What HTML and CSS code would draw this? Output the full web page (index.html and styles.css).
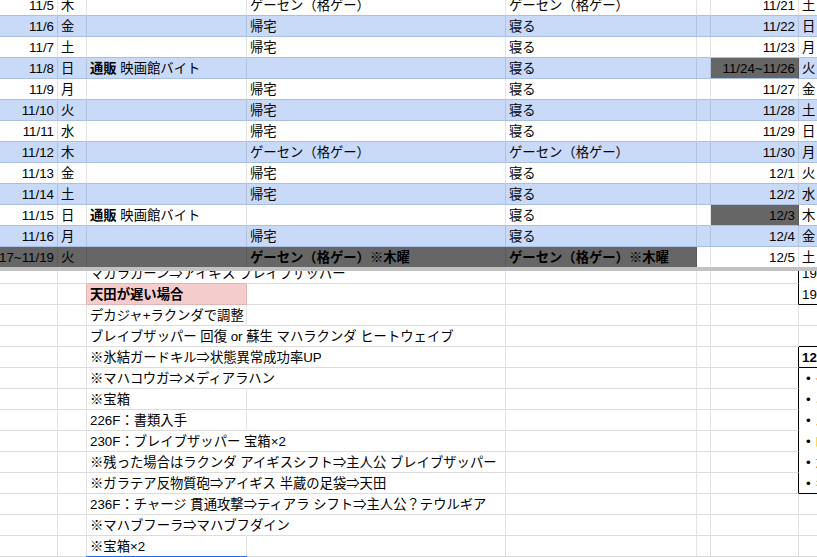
FILE: index.html
```html
<!DOCTYPE html>
<html lang="ja">
<head>
<meta charset="utf-8">
<title>Sheet</title>
<link rel="stylesheet" href="styles.css">
</head>
<body>
<div class="sheet">
  <div class="top">
    <div class="row"><div class="c r">11/5</div><div class="c">木</div><div class="c"></div><div class="c">ゲーセン（格ゲー）</div><div class="c">ゲーセン（格ゲー）</div><div class="c"></div><div class="c r">11/21</div><div class="c">土</div></div>
    <div class="row blue"><div class="c r">11/6</div><div class="c">金</div><div class="c"></div><div class="c">帰宅</div><div class="c">寝る</div><div class="c"></div><div class="c r">11/22</div><div class="c">日</div></div>
    <div class="row"><div class="c r">11/7</div><div class="c">土</div><div class="c"></div><div class="c">帰宅</div><div class="c">寝る</div><div class="c"></div><div class="c r">11/23</div><div class="c">月</div></div>
    <div class="row blue"><div class="c r">11/8</div><div class="c">日</div><div class="c"><span class="bd">通販</span> 映画館バイト</div><div class="c"></div><div class="c">寝る</div><div class="c"></div><div class="c r dk">11/24~11/26</div><div class="c">火</div></div>
    <div class="row"><div class="c r">11/9</div><div class="c">月</div><div class="c"></div><div class="c">帰宅</div><div class="c">寝る</div><div class="c"></div><div class="c r">11/27</div><div class="c">金</div></div>
    <div class="row blue"><div class="c r">11/10</div><div class="c">火</div><div class="c"></div><div class="c">帰宅</div><div class="c">寝る</div><div class="c"></div><div class="c r">11/28</div><div class="c">土</div></div>
    <div class="row"><div class="c r">11/11</div><div class="c">水</div><div class="c"></div><div class="c">帰宅</div><div class="c">寝る</div><div class="c"></div><div class="c r">11/29</div><div class="c">日</div></div>
    <div class="row blue"><div class="c r">11/12</div><div class="c">木</div><div class="c"></div><div class="c">ゲーセン（格ゲー）</div><div class="c">ゲーセン（格ゲー）</div><div class="c"></div><div class="c r">11/30</div><div class="c">月</div></div>
    <div class="row"><div class="c r">11/13</div><div class="c">金</div><div class="c"></div><div class="c">帰宅</div><div class="c">寝る</div><div class="c"></div><div class="c r">12/1</div><div class="c">火</div></div>
    <div class="row blue"><div class="c r">11/14</div><div class="c">土</div><div class="c"></div><div class="c">帰宅</div><div class="c">寝る</div><div class="c"></div><div class="c r">12/2</div><div class="c">水</div></div>
    <div class="row"><div class="c r">11/15</div><div class="c">日</div><div class="c"><span class="bd">通販</span> 映画館バイト</div><div class="c"></div><div class="c">寝る</div><div class="c"></div><div class="c r dk">12/3</div><div class="c">木</div></div>
    <div class="row blue"><div class="c r">11/16</div><div class="c">月</div><div class="c"></div><div class="c">帰宅</div><div class="c">寝る</div><div class="c"></div><div class="c r">12/4</div><div class="c">金</div></div>
    <div class="row last"><div class="c r dk">11/17~11/19</div><div class="c dk">火</div><div class="c dk"></div><div class="c dk bd">ゲーセン（格ゲー）※木曜</div><div class="c dk bd">ゲーセン（格ゲー）※木曜</div><div class="c"></div><div class="c r">12/5</div><div class="c">土</div></div>
  </div>
  <div class="frz"></div>
  <div class="bot">
    <div class="bot-in">
      <div class="row"><div class="c"></div><div class="c"></div><div class="c ov pk-top">マカラカーン⇒アイギス ブレイブザッパー</div><div class="c"></div><div class="c"></div><div class="c"></div><div class="c bxl"></div><div class="c nb">19:00</div></div>
      <div class="row"><div class="c"></div><div class="c pk-left"></div><div class="c pink">天田が遅い場合</div><div class="c"></div><div class="c"></div><div class="c"></div><div class="c bxl"></div><div class="c bxb">19:30</div></div>
      <div class="row"><div class="c"></div><div class="c"></div><div class="c">デカジャ+ラクンダで調整</div><div class="c"></div><div class="c"></div><div class="c"></div><div class="c"></div><div class="c"></div></div>
      <div class="row"><div class="c"></div><div class="c"></div><div class="c ov">ブレイブザッパー 回復 or 蘇生 マハラクンダ ヒートウェイブ</div><div class="c"></div><div class="c"></div><div class="c"></div><div class="c"></div><div class="c bxb"></div></div>
      <div class="row"><div class="c"></div><div class="c"></div><div class="c ov">※氷結ガードキル⇒状態異常成功率UP</div><div class="c"></div><div class="c"></div><div class="c"></div><div class="c bxl"></div><div class="c bxb bd">12/5</div></div>
      <div class="row"><div class="c"></div><div class="c"></div><div class="c ov">※マハコウガ⇒メディアラハン</div><div class="c"></div><div class="c"></div><div class="c"></div><div class="c bxl"></div><div class="c nb bul">• <span class="or">イベント</span></div></div>
      <div class="row"><div class="c"></div><div class="c"></div><div class="c">※宝箱</div><div class="c"></div><div class="c"></div><div class="c"></div><div class="c bxl"></div><div class="c nb bul">• <span class="or2">ミッション</span></div></div>
      <div class="row"><div class="c"></div><div class="c"></div><div class="c">226F：書類入手</div><div class="c"></div><div class="c"></div><div class="c"></div><div class="c bxl"></div><div class="c nb bul">• <span class="or">メンテナンス</span></div></div>
      <div class="row"><div class="c"></div><div class="c"></div><div class="c ov">230F：ブレイブザッパー 宝箱×2</div><div class="c"></div><div class="c"></div><div class="c"></div><div class="c bxl"></div><div class="c nb bul">• <span class="ye">ログイン</span></div></div>
      <div class="row"><div class="c"></div><div class="c"></div><div class="c ov">※残った場合はラクンダ アイギスシフト⇒主人公 ブレイブザッパー</div><div class="c"></div><div class="c"></div><div class="c"></div><div class="c bxl"></div><div class="c nb bul">• <span class="or">ガチャ</span></div></div>
      <div class="row"><div class="c"></div><div class="c"></div><div class="c ov">※ガラテア反物質砲⇒アイギス 半蔵の足袋⇒天田</div><div class="c"></div><div class="c"></div><div class="c"></div><div class="c bxl"></div><div class="c bxb bul">• <span class="ye">キャンペーン</span></div></div>
      <div class="row"><div class="c"></div><div class="c"></div><div class="c ov">236F：チャージ 貫通攻撃⇒ティアラ シフト⇒主人公？テウルギア</div><div class="c"></div><div class="c"></div><div class="c"></div><div class="c"></div><div class="c"></div></div>
      <div class="row"><div class="c"></div><div class="c"></div><div class="c ov">※マハブフーラ⇒マハブフダイン</div><div class="c"></div><div class="c"></div><div class="c"></div><div class="c"></div><div class="c"></div></div>
      <div class="row"><div class="c"></div><div class="c"></div><div class="c sel">※宝箱×2</div><div class="c"></div><div class="c"></div><div class="c"></div><div class="c"></div><div class="c"></div></div>
      <div class="row"><div class="c"></div><div class="c"></div><div class="c"></div><div class="c"></div><div class="c"></div><div class="c"></div><div class="c"></div><div class="c"></div></div>
    </div>
  </div>
</div>
</body>
</html>
```

FILE: styles.css
```css
html, body {
  margin: 0;
  padding: 0;
  overflow: hidden;
  background: #fff;
}
body {
  width: 817px;
  height: 557px;
  font-family: "Liberation Sans", "Noto Sans CJK JP", sans-serif;
  font-size: 13.333px;
  color: #000;
}
.sheet {
  width: 940px;
}
.top {
  margin-top: -5px;
}
.row {
  display: grid;
  grid-template-columns: 58px 29px 160px 259px 191px 14px 88px 141px;
}
.c {
  box-sizing: border-box;
  height: 21px;
  padding: 2px 3px 0;
  line-height: 18px;
  white-space: nowrap;
  overflow: hidden;
  border-right: 1px solid rgba(0, 0, 0, 0.11);
  border-bottom: 1px solid #dcdcdc;
}
.r {
  display: flex;
  justify-content: flex-end;
}
.bd {
  font-weight: 700;
}
.top .c {
  border-bottom-color: #a9bfe6;
}
.top .last .c {
  border-bottom: 0;
  height: 20px;
}
.blue .c {
  background: #c9daf8;
}
.c.dk {
  background: #666;
}
.frz {
  height: 4px;
  background: #c2c2c2;
}
.bot {
  height: 286px;
  overflow: hidden;
}
.bot-in {
  margin-top: -8px;
}
.ov {
  overflow: visible;
  border-right-color: transparent;
}
.pink {
  background: #f4cccc;
  font-weight: 700;
  border-right-color: #e3b4b4;
  border-bottom-color: #e3b4b4;
}
.pk-top {
  border-bottom-color: #e3b4b4;
}
.pk-left {
  border-right-color: #e3b4b4;
}
.bxl {
  border-right-color: #000;
}
.bxb {
  border-bottom-color: #000;
}
.nb {
  border-bottom-color: transparent;
}
.bul {
  padding-left: 7px;
}
.or { color: #e69138; }
.or2 { color: #b45f06; }
.ye { color: #f1c232; }
.sel {
  position: relative;
  overflow: visible;
}
.sel::after {
  content: "";
  position: absolute;
  left: -1px;
  bottom: -2px;
  width: 161px;
  height: 2px;
  background: #1a73e8;
}
```
